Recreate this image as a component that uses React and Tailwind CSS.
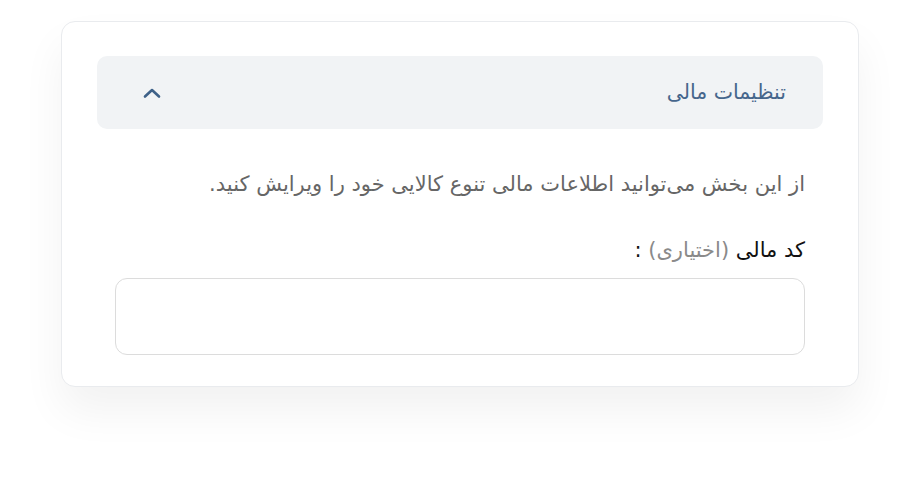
const ChevronUp = () => (
  <svg width="18" height="12" viewBox="0 0 18 12" fill="none">
    <path d="M2 9.5 L9 3 L16 9.5" stroke="#3e6188" strokeWidth="2.6" strokeLinecap="round" strokeLinejoin="round" />
  </svg>
);

export default function App() {
  return (
    <div className="h-[488px] w-[920px] overflow-hidden bg-white px-[61px] pt-[21px] font-['DejaVu_Sans',sans-serif]">
      <section
        dir="rtl"
        className="h-[366px] rounded-[14px] border border-[#e9ebee] bg-white px-[35px] pt-[34px] shadow-[0_24px_44px_rgba(0,0,0,0.055)]"
      >
        <div className="flex h-[73px] items-center justify-between rounded-[10px] bg-[#f1f3f5] pl-[46px] pr-[37px]">
          <h3 className="-mt-[2px] text-[20.5px] leading-[30px] text-[#46668c]">تنظیمات مالی</h3>
          <ChevronUp />
        </div>

        <div className="px-[18px]">
          <p className="mt-[40px] text-[21px] leading-[30px] text-[#666]">
            از این بخش می‌توانید اطلاعات مالی تنوع کالایی خود را ویرایش کنید.
          </p>
          <label className="mt-[36px] block text-[21px] leading-[30px] text-[#111]">
            کد مالی <span className="text-[#8a8a8a]">(اختیاری)</span> :
          </label>
          <input
            type="text"
            className="mt-[13px] block h-[77px] w-full rounded-[12px] border border-[#dcdcdc] bg-white px-4 outline-none"
          />
        </div>
      </section>
    </div>
  );
}
